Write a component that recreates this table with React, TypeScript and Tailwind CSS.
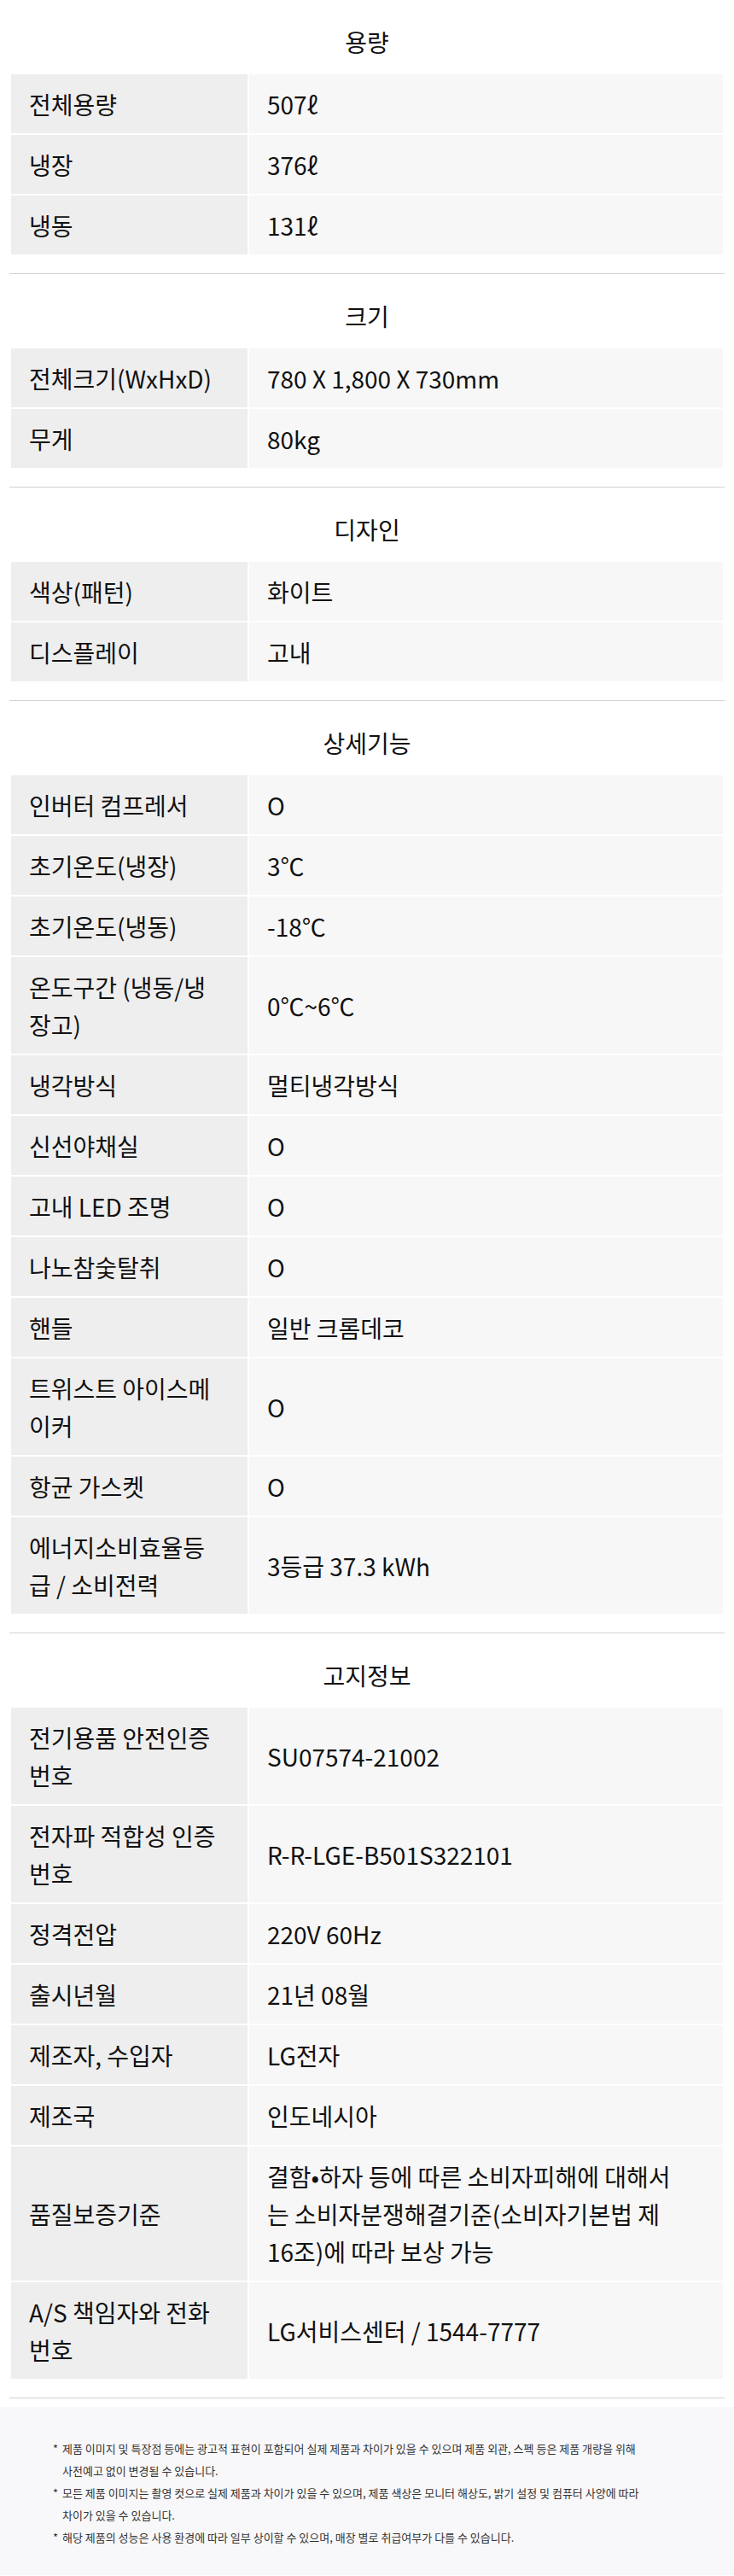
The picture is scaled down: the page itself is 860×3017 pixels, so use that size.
import React from "react"

type Row = { label: string; value: string }
type Section = { title: string; rows: Row[] }

const sections: Section[] = [
  {
    title: "용량",
    rows: [
      { label: "전체용량", value: "507ℓ" },
      { label: "냉장", value: "376ℓ" },
      { label: "냉동", value: "131ℓ" },
    ],
  },
  {
    title: "크기",
    rows: [
      { label: "전체크기(WxHxD)", value: "780 X 1,800 X 730mm" },
      { label: "무게", value: "80kg" },
    ],
  },
  {
    title: "디자인",
    rows: [
      { label: "색상(패턴)", value: "화이트" },
      { label: "디스플레이", value: "고내" },
    ],
  },
  {
    title: "상세기능",
    rows: [
      { label: "인버터 컴프레서", value: "O" },
      { label: "초기온도(냉장)", value: "3℃" },
      { label: "초기온도(냉동)", value: "-18℃" },
      { label: "온도구간 (냉동/냉\n장고)", value: "0℃~6℃" },
      { label: "냉각방식", value: "멀티냉각방식" },
      { label: "신선야채실", value: "O" },
      { label: "고내 LED 조명", value: "O" },
      { label: "나노참숯탈취", value: "O" },
      { label: "핸들", value: "일반 크롬데코" },
      { label: "트위스트 아이스메\n이커", value: "O" },
      { label: "항균 가스켓", value: "O" },
      { label: "에너지소비효율등\n급 / 소비전력", value: "3등급 37.3 kWh" },
    ],
  },
  {
    title: "고지정보",
    rows: [
      { label: "전기용품 안전인증\n번호", value: "SU07574-21002" },
      { label: "전자파 적합성 인증\n번호", value: "R-R-LGE-B501S322101" },
      { label: "정격전압", value: "220V 60Hz" },
      { label: "출시년월", value: "21년 08월" },
      { label: "제조자, 수입자", value: "LG전자" },
      { label: "제조국", value: "인도네시아" },
      {
        label: "품질보증기준",
        value: "결함•하자 등에 따른 소비자피해에 대해서\n는 소비자분쟁해결기준(소비자기본법 제\n16조)에 따라 보상 가능",
      },
      { label: "A/S 책임자와 전화\n번호", value: "LG서비스센터 / 1544-7777" },
    ],
  },
]

const notices: string[][] = [
  [
    "제품 이미지 및 특장점 등에는 광고적 표현이 포함되어 실제 제품과 차이가 있을 수 있으며 제품 외관, 스펙 등은 제품 개량을 위해",
    "사전예고 없이 변경될 수 있습니다.",
  ],
  [
    "모든 제품 이미지는 촬영 컷으로 실제 제품과 차이가 있을 수 있으며, 제품 색상은 모니터 해상도, 밝기 설정 및 컴퓨터 사양에 따라",
    "차이가 있을 수 있습니다.",
  ],
  ["해당 제품의 성능은 사용 환경에 따라 일부 상이할 수 있으며, 매장 별로 취급여부가 다를 수 있습니다."],
]

function SpecSection({ section }: { section: Section }) {
  return (
    <section>
      <h3 className="pt-[29px] pb-[16px] text-center text-[28px] leading-[40px] font-normal text-[#111]">
        {section.title}
      </h3>
      <div className="grid grid-cols-[277px_1fr] gap-[2px] p-[2px]">
        {section.rows.map((row) => (
          <React.Fragment key={row.label}>
            <div className="flex items-center bg-[#eeeeee] py-[12.5px] pl-[21px] pr-[8px] whitespace-pre-line">
              {row.label}
            </div>
            <div className="flex items-center bg-[#f7f7f7] py-[12.5px] pl-[21px] pr-[8px] whitespace-pre-line">
              {row.value}
            </div>
          </React.Fragment>
        ))}
      </div>
      <div className="mt-[20px] border-t border-[#d2d2d2]" />
    </section>
  )
}

export default function App() {
  return (
    <div className="w-[860px] bg-white font-['Noto_Sans_CJK_KR','Noto_Sans',sans-serif] text-[#111]">
      <div className="px-[11px] text-[28px] leading-[44px]">
        {sections.map((section) => (
          <SpecSection key={section.title} section={section} />
        ))}
      </div>

      {/* notice */}
      <div className="mt-[10px] bg-[#f8f8fa] px-[62px] pt-[36px] pb-[31px] text-[13px] leading-[26px] text-[#333]">
        {notices.map((lines, i) => (
          <div key={i} className="flex">
            <span className="w-[11px] shrink-0">*</span>
            <div>
              {lines.map((line) => (
                <div key={line} className="whitespace-nowrap">
                  {line}
                </div>
              ))}
            </div>
          </div>
        ))}
      </div>
    </div>
  )
}
